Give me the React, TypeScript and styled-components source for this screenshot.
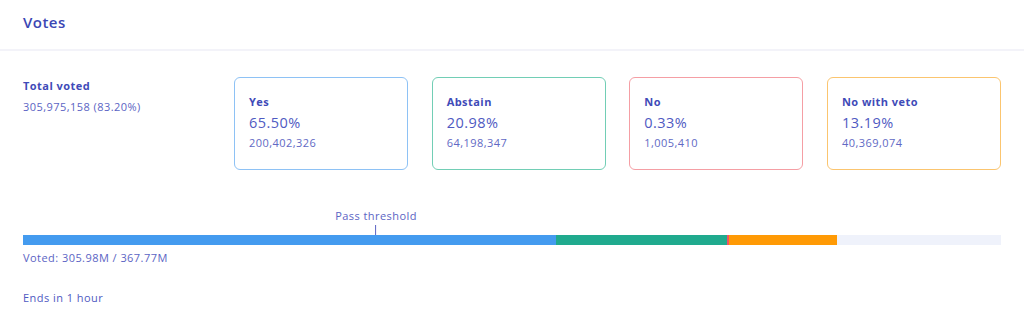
import React from "react";
import styled, { createGlobalStyle } from "styled-components";

const Global = createGlobalStyle`
  html, body { margin: 0; padding: 0; background: #fff; }
  body { font-family: "Open Sans", "Noto Sans", sans-serif; letter-spacing: 0.45px; }
`;

const Page = styled.div`
  width: 1024px;
  height: 331px;
  background: #fff;
  color: #3f4bb8;
`;

const Header = styled.div`
  height: 51px;
  display: flex;
  align-items: center;
  padding: 0 23px 6px;
  box-sizing: border-box;
  border-bottom: 2px solid #f3f3f9;
`;

const Title = styled.h2`
  margin: 0;
  font-size: 15px;
  font-weight: 600;
  color: #3b47b4;
`;

const Body = styled.div`
  padding: 26px 23px 0;
`;

const TopRow = styled.div`
  display: flex;
  align-items: flex-start;
`;

const Summary = styled.div`
  width: 211px;
  flex-shrink: 0;
  padding-top: 1px;
  display: flex;
  flex-direction: column;
  gap: 5px;
`;

const Label = styled.div`
  font-size: 11px;
  font-weight: 700;
  color: #3f4bb8;
  line-height: 16px;
`;

const SubValue = styled.div`
  font-size: 11px;
  color: #5b64c4;
  line-height: 16px;
`;

const Cards = styled.div`
  flex: 1;
  display: flex;
  justify-content: space-between;
`;

const Card = styled.div<{ $color: string }>`
  width: 174px;
  height: 93px;
  box-sizing: border-box;
  border: 1.5px solid ${(p) => p.$color};
  border-radius: 6px;
  padding: 16px 14px 0;
  display: flex;
  flex-direction: column;
`;

const Percent = styled.div`
  font-size: 14.5px;
  color: #4f5ac2;
  line-height: 20px;
  margin-top: 3px;
`;

const Count = styled.div`
  font-size: 11px;
  color: #6169c4;
  line-height: 16px;
  margin-top: 2px;
`;

const BarSection = styled.div`
  margin-top: 38px;
`;

const ThresholdWrap = styled.div`
  height: 27px;
  position: relative;
`;

const Threshold = styled.div`
  position: absolute;
  top: 0;
  bottom: 0;
  transform: translateX(-50%);
  display: flex;
  flex-direction: column;
  align-items: center;
  justify-content: space-between;
`;

const ThresholdText = styled.div`
  font-size: 11px;
  color: #5b64c4;
  line-height: 16px;
  white-space: nowrap;
`;

const Tick = styled.div`
  width: 1px;
  height: 10px;
  background: #5b64c4;
`;

const Bar = styled.div`
  display: flex;
  height: 10px;
  background: #eff2fb;
`;

const Segment = styled.div<{ $color: string }>`
  height: 100%;
  background: ${(p) => p.$color};
`;

const Voted = styled.div`
  font-size: 11px;
  color: #5b64c4;
  line-height: 16px;
  margin-top: 5px;
`;

const Ends = styled.div`
  font-size: 11px;
  color: #4f5ac2;
  line-height: 16px;
  margin-top: 24px;
`;

const options = [
  { label: "Yes", pct: "65.50%", count: "200,402,326", border: "#8ec2f5", bar: "#449bef", value: 65.5 },
  { label: "Abstain", pct: "20.98%", count: "64,198,347", border: "#72ceb5", bar: "#20aa8e", value: 20.98 },
  { label: "No", pct: "0.33%", count: "1,005,410", border: "#f59ea4", bar: "#ef5366", value: 0.33 },
  { label: "No with veto", pct: "13.19%", count: "40,369,074", border: "#fbc56f", bar: "#ff9a05", value: 13.19 },
];

const turnout = 305.98 / 367.77;

export default function App() {
  return (
    <Page>
      <Global />
      <Header>
        <Title>Votes</Title>
      </Header>
      <Body>
        <TopRow>
          <Summary>
            <Label>Total voted</Label>
            <SubValue>305,975,158 (83.20%)</SubValue>
          </Summary>
          <Cards>
            {options.map((o) => (
              <Card key={o.label} $color={o.border}>
                <Label>{o.label}</Label>
                <Percent>{o.pct}</Percent>
                <Count>{o.count}</Count>
              </Card>
            ))}
          </Cards>
        </TopRow>
        <BarSection>
          <ThresholdWrap>
            <Threshold style={{ left: "36.1%" }}>
              <ThresholdText>Pass threshold</ThresholdText>
              <Tick />
            </Threshold>
          </ThresholdWrap>
          <Bar>
            {options.map((o) => (
              <Segment
                key={o.label}
                $color={o.bar}
                style={{ width: `${o.value * turnout}%` }}
              />
            ))}
          </Bar>
          <Voted>Voted: 305.98M / 367.77M</Voted>
          <Ends>Ends in 1 hour</Ends>
        </BarSection>
      </Body>
    </Page>
  );
}
